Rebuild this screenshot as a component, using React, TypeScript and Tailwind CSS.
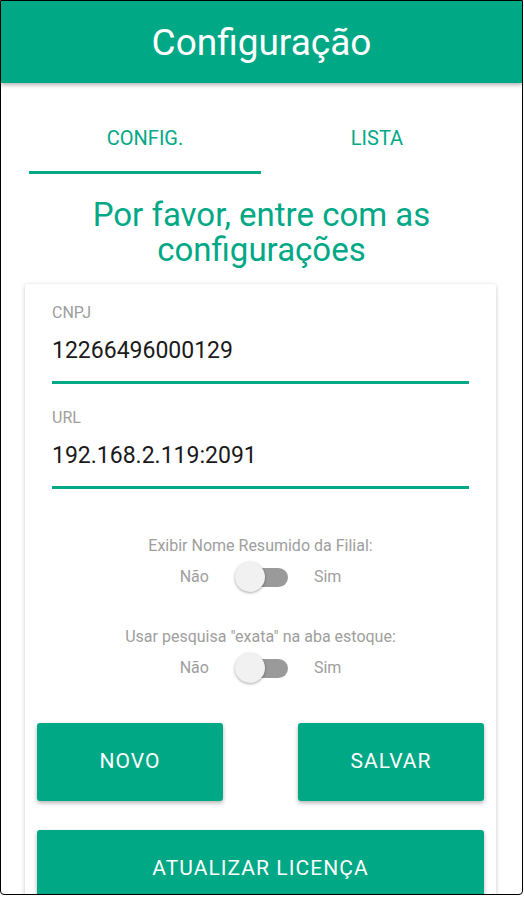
import { useState } from "react";

const GREEN = "bg-[#00a886]";

function Field({ label, value }: { label: string; value: string }) {
  return (
    <div className="flex flex-col">
      <span className="text-[16px] leading-[18px] text-[#9e9e9e]">{label}</span>
      <span className="mt-[16px] text-[23px] leading-[26px] text-[#1a1a1a]">{value}</span>
      <div className={`mt-[17px] h-[3px] ${GREEN}`} />
    </div>
  );
}

function Toggle({ label }: { label: string }) {
  const [on, setOn] = useState(false);
  return (
    <div className="flex flex-col items-center">
      <span className="text-[16px] leading-[18px] text-[#9e9e9e]">{label}</span>
      <div className="mt-[7px] flex items-center gap-[26px] text-[16px] text-[#9e9e9e]">
        <span>Não</span>
        <button
          type="button"
          onClick={() => setOn(!on)}
          className="relative h-[30px] w-[53px]"
        >
          <span className="absolute left-[7px] right-0 top-[5.5px] h-[19px] rounded-full bg-[#9a9a9a]" />
          <span
            className={`absolute top-0 h-[30px] w-[30px] rounded-full bg-[#f1f1f1] shadow-[0_1px_3px_rgba(0,0,0,0.35)] ${on ? "left-[23px]" : "left-0"}`}
          />
        </button>
        <span>Sim</span>
      </div>
    </div>
  );
}

function ActionButton({ children, className = "" }: { children: string; className?: string }) {
  return (
    <button
      type="button"
      className={`flex h-[78px] items-center justify-center rounded-[3px] ${GREEN} text-[21px] tracking-[0.05em] text-white shadow-[0_2px_4px_rgba(0,0,0,0.3)] ${className}`}
    >
      {children}
    </button>
  );
}

export default function App() {
  const [tab, setTab] = useState(0);

  return (
    <div className="h-[895px] w-[523px] overflow-hidden rounded-b-[4px] border border-black bg-white font-['Roboto',sans-serif]">
      <header
        className={`relative z-10 flex h-[82px] items-center justify-center ${GREEN} shadow-[0_2px_4px_rgba(0,0,0,0.3)]`}
      >
        <h1 className="text-[37px] leading-none text-white">Configuração</h1>
      </header>

      <div className="ml-[28px] mt-[22px] flex w-[464px]">
        {["CONFIG.", "LISTA"].map((t, i) => (
          <button
            key={t}
            type="button"
            onClick={() => setTab(i)}
            className="flex flex-1 flex-col items-stretch"
          >
            <span className="flex h-[66px] items-center justify-center text-[20px] text-[#00a886]">{t}</span>
            <span className={`h-[3px] ${tab === i ? GREEN : "bg-transparent"}`} />
          </button>
        ))}
      </div>

      <h2 className="mx-auto mt-[23px] w-[400px] text-center text-[33px] leading-[35px] text-[#00a886]">
        Por favor, entre com as configurações
      </h2>

      <div className="ml-[24px] mt-[17px] w-[471px] rounded-[3px] bg-white px-[12px] pb-[40px] pt-[20px] shadow-[0_1px_4px_rgba(0,0,0,0.22)]">
        <div className="flex flex-col gap-[25px] px-[15px]">
          <Field label="CNPJ" value="12266496000129" />
          <Field label="URL" value="192.168.2.119:2091" />
        </div>

        <div className="mt-[48px] flex flex-col gap-[36px]">
          <Toggle label="Exibir Nome Resumido da Filial:" />
          <Toggle label={'Usar pesquisa "exata" na aba estoque:'} />
        </div>

        <div className="mt-[40px] flex justify-between">
          <ActionButton className="w-[186px]">NOVO</ActionButton>
          <ActionButton className="w-[186px]">SALVAR</ActionButton>
        </div>
        <ActionButton className="mt-[29px] w-full">ATUALIZAR LICENÇA</ActionButton>
      </div>
    </div>
  );
}
